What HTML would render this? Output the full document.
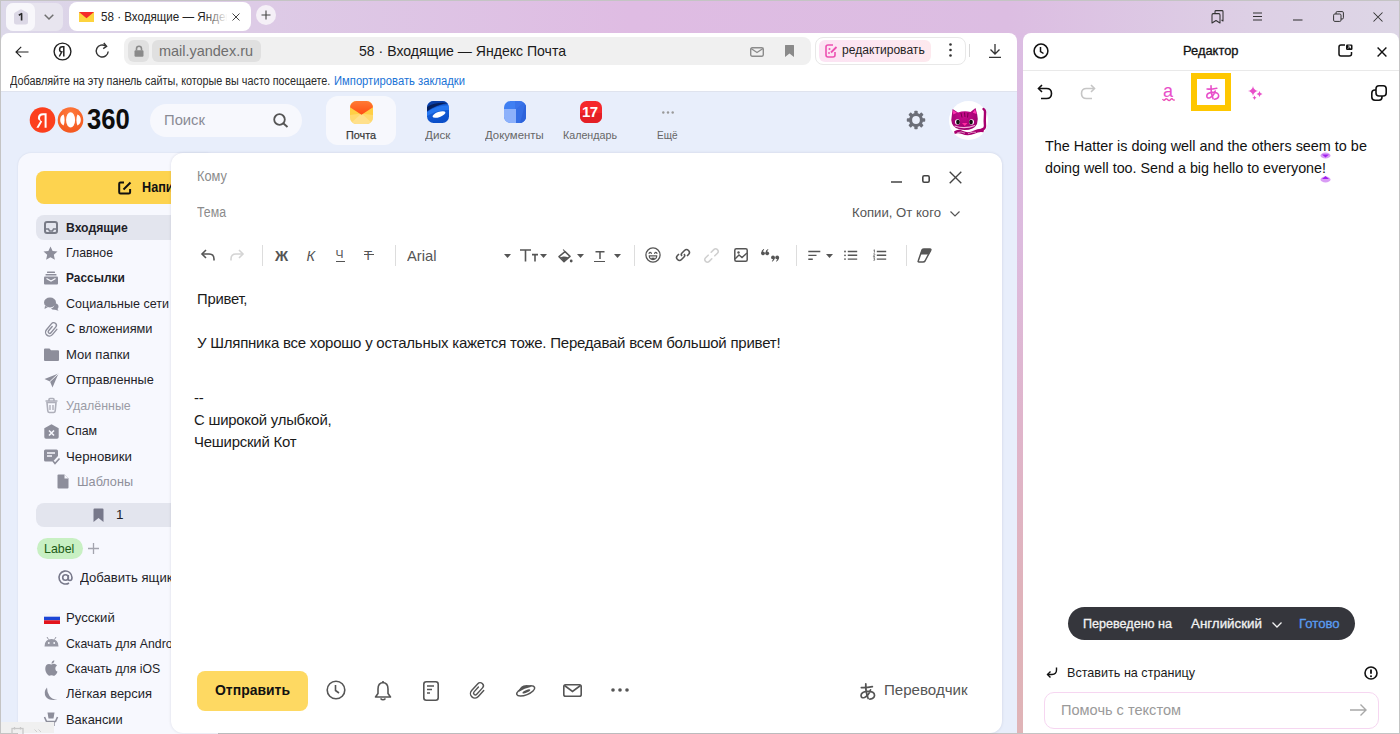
<!DOCTYPE html>
<html><head><meta charset="utf-8">
<style>
*{box-sizing:border-box;margin:0;padding:0}
html,body{width:1400px;height:734px;overflow:hidden;background:#c4c4c4;font-family:"Liberation Sans",sans-serif;}
.a{position:absolute}
.t{position:absolute;white-space:nowrap;line-height:1}
svg{position:absolute;overflow:visible}
#frame{left:1px;top:1px;width:1398px;height:732px;background:linear-gradient(90deg,#dcd8e9 0%,#ddcbe6 18%,#dfbce3 45%,#dcbde2 72%,#ddd0e5 90%,#ddd6e6 100%)}
#gapgrad{left:1017px;top:33px;width:6px;height:700px;background:linear-gradient(180deg,#dcbde3 0%,#ddbbde 30%,#e0b5cc 55%,#e0b3bb 80%,#e0b4b7 100%)}
#main{left:1px;top:32.5px;width:1016px;height:700.5px;background:#fff;border-radius:8px 8px 0 0;overflow:hidden}
#side{left:1023px;top:32.5px;width:376px;height:700.5px;background:#fff;border-radius:8px 8px 0 0;overflow:hidden}
</style></head>
<body>
<div class="a" id="frame"></div>
<div class="a" id="gapgrad"></div>

<!-- TAB BAR -->
<div class="a" style="left:6px;top:2.5px;width:57px;height:28px;border-radius:7px;background:#e8e5ef"></div>
<div class="a" style="left:6px;top:2.5px;width:28.5px;height:28px;border-radius:7px;background:#f8f7fb"></div>
<svg style="left:13px;top:9px" width="16" height="16" viewBox="0 0 16 16"><path d="M6.8 0.7 Q8 0 9.2 0.7 L14 3.6 Q15 4.2 15 5.4 V13 Q15 15.5 12.5 15.5 H3.5 Q1 15.5 1 13 V5.4 Q1 4.2 2 3.6 Z" fill="#dcd8e6"/></svg>
<svg style="left:17.5px;top:13px" width="6" height="8" viewBox="0 0 6 8"><path d="M0.8 2.2 L3.6 0.6 V7.4" stroke="#2a2a2a" stroke-width="1.6" fill="none" stroke-linejoin="round"/></svg>
<svg style="left:44px;top:13.5px" width="10" height="6" viewBox="0 0 10 6"><path d="M0.7 0.8 L5 5 L9.3 0.8" stroke="#707070" stroke-width="1.5" fill="none"/></svg>

<div class="a" style="left:69px;top:2px;width:182px;height:29px;background:#fff;border-radius:8px"></div>
<svg style="left:79px;top:12px" width="15" height="10" viewBox="0 0 15 10"><rect width="15" height="10" fill="#fdd33d"/><path d="M0 0 H15 L7.5 6.3 Z" fill="#f52a2a"/></svg>
<div class="a" style="left:101px;top:6px;width:128px;height:22px;overflow:hidden"><span class="t" style="left:0;top:4px;font-size:13.5px;color:#222;transform:scaleX(0.86);transform-origin:0 0">58 · Входящие — Яндекс Почта</span></div>
<div class="a" style="left:204px;top:6px;width:26px;height:22px;background:linear-gradient(90deg,rgba(255,255,255,0),#fff 90%)"></div>
<svg style="left:232px;top:13px" width="8" height="8" viewBox="0 0 8 8"><path d="M0.5 0.5 L7.5 7.5 M7.5 0.5 L0.5 7.5" stroke="#444" stroke-width="1"/></svg>
<div class="a" style="left:256px;top:5px;width:20px;height:20px;border-radius:50%;background:#f5f0f7"></div>
<svg style="left:261px;top:10px" width="10" height="10" viewBox="0 0 10 10"><path d="M5 0.5 V9.5 M0.5 5 H9.5" stroke="#444" stroke-width="1.1"/></svg>

<!-- window controls -->
<svg style="left:1211px;top:10px" width="13" height="14" viewBox="0 0 13 14"><path d="M4 3 V1.5 Q4 0.6 5 0.6 H11 Q12 0.6 12 1.5 V11 L10.5 10 M1 13 V5 Q1 3.6 2.2 3.6 H7.8 Q9 3.6 9 5 V13 L5 10.5 Z" stroke="#333" stroke-width="1.05" fill="none" stroke-linejoin="round"/></svg>
<svg style="left:1253px;top:12px" width="10" height="9" viewBox="0 0 10 9"><path d="M0 1 H9 M0 4.5 H9 M0 8 H9" stroke="#333" stroke-width="1.05"/></svg>
<svg style="left:1293px;top:19px" width="10" height="2" viewBox="0 0 10 2"><path d="M0 1 H9.5" stroke="#333" stroke-width="1.05"/></svg>
<svg style="left:1333px;top:11px" width="11" height="11" viewBox="0 0 11 11"><rect x="0.6" y="3" width="7.4" height="7.4" rx="1.2" stroke="#333" stroke-width="1" fill="none"/><path d="M3 3 V1.8 Q3 0.6 4.2 0.6 H9.2 Q10.4 0.6 10.4 1.8 V6.8 Q10.4 8 9.2 8 H8" stroke="#333" stroke-width="1" fill="none"/></svg>
<svg style="left:1373px;top:12px" width="10" height="10" viewBox="0 0 10 10"><path d="M0.5 0.5 L9.5 9.5 M9.5 0.5 L0.5 9.5" stroke="#333" stroke-width="1.05"/></svg>

<!-- MAIN BROWSER PANEL -->
<div class="a" id="main"></div>
<!-- nav -->
<svg style="left:15px;top:45.5px" width="14" height="12" viewBox="0 0 14 12"><path d="M13.5 6 H1 M6.2 0.8 L1 6 L6.2 11.2" stroke="#222" stroke-width="1.15" fill="none"/></svg>
<svg style="left:53px;top:42px" width="19" height="19" viewBox="0 0 19 19"><circle cx="9.5" cy="9.5" r="8.4" stroke="#222" stroke-width="1.4" fill="none"/><path d="M10.8 14.5 V4.8 H9.3 Q6.6 4.8 6.6 7.4 Q6.6 9.6 8.8 9.9 L6.3 14.5" stroke="#222" stroke-width="1.5" fill="none"/></svg>
<svg style="left:95px;top:42px" width="15" height="17" viewBox="0 0 15 17"><path d="M10.8 4.2 A6 6 0 1 0 13.2 9.5" stroke="#333" stroke-width="1.4" fill="none"/><path d="M8.8 1 L11.6 4.3 L8.2 6.6" stroke="#333" stroke-width="1.4" fill="none"/></svg>
<!-- url bar -->
<div class="a" style="left:124px;top:37px;width:687px;height:28px;border-radius:8px;background:#f0f0f0"></div>
<div class="a" style="left:128px;top:40px;width:21px;height:22px;border-radius:6px;background:#e0e0e0"></div>
<svg style="left:134px;top:45px" width="10" height="12" viewBox="0 0 10 12"><path d="M2.5 5.5 V3.8 Q2.5 1.2 5 1.2 Q7.5 1.2 7.5 3.8 V5.5" stroke="#8a8a8a" stroke-width="1.6" fill="none"/><rect x="0.5" y="5.2" width="9" height="6.5" rx="1.2" fill="#8a8a8a"/></svg>
<div class="a" style="left:152px;top:40px;width:109px;height:22px;border-radius:6px;background:#e0e0e0"></div>
<div class="t" style="left:159px;top:44px;font-size:14.5px;color:#6e6e6e;transform:scaleX(0.997);transform-origin:0 0">mail.yandex.ru</div>
<div class="t" style="left:359px;top:43px;font-size:15px;color:#1a1a1a;transform:scaleX(0.938);transform-origin:0 0">58 · Входящие — Яндекс Почта</div>
<svg style="left:750px;top:47px" width="14" height="10" viewBox="0 0 14 10"><rect x="0.7" y="0.7" width="12.6" height="8.6" rx="1.5" stroke="#8c8c8c" stroke-width="1.4" fill="none"/><path d="M1 1.5 L7 5.5 L13 1.5" stroke="#8c8c8c" stroke-width="1.4" fill="none"/></svg>
<svg style="left:785px;top:45px" width="9" height="12" viewBox="0 0 9 12"><path d="M0 0.5 Q0 0 0.5 0 H8.5 Q9 0 9 0.5 V12 L4.5 8.5 L0 12 Z" fill="#8a8a8a"/></svg>
<div class="a" style="left:815px;top:37px;width:151px;height:28px;border-radius:8px;border:1px solid #e8e8e8;background:#fff"></div>
<div class="a" style="left:819px;top:40px;width:112px;height:22px;border-radius:6px;background:linear-gradient(90deg,#fce3f4,#fde9ee)"></div>
<svg style="left:825px;top:44px" width="13" height="14" viewBox="0 0 13 14"><path d="M8 1 H3 Q1 1 1 3 V11 Q1 13 3 13 H8 Q10 13 10 11 V8" stroke="#ec4fb1" stroke-width="1.6" fill="none"/><path d="M6 8.5 L11.5 3" stroke="#ec4fb1" stroke-width="1.8"/><circle cx="4.5" cy="5" r="1" fill="#ec4fb1"/><circle cx="4" cy="9" r="0.9" fill="#ec4fb1"/></svg>
<div class="t" style="left:842px;top:44px;font-size:12.5px;color:#1f1f1f;transform:scaleX(0.967);transform-origin:0 0">редактировать</div>
<svg style="left:949px;top:43px" width="3" height="14" viewBox="0 0 3 14"><circle cx="1.5" cy="1.5" r="1.3" fill="#333"/><circle cx="1.5" cy="7" r="1.3" fill="#333"/><circle cx="1.5" cy="12.5" r="1.3" fill="#333"/></svg>
<div class="a" style="left:969px;top:44px;width:1px;height:13px;background:#d8d8d8"></div>
<svg style="left:989px;top:44px" width="12" height="14" viewBox="0 0 12 14"><path d="M6 0 V10 M1.5 5.5 L6 10 L10.5 5.5 M0 13.3 H12" stroke="#333" stroke-width="1.3" fill="none"/></svg>
<!-- bookmarks bar -->
<div class="t" style="left:10px;top:75px;font-size:12px;color:#2a2a2a;transform:scaleX(0.900);transform-origin:0 0">Добавляйте на эту панель сайты, которые вы часто посещаете.</div>
<div class="t" style="left:334px;top:75px;font-size:12px;color:#1a73d6;transform:scaleX(0.936);transform-origin:0 0">Импортировать закладки</div>

<!-- MAIL PAGE -->
<div class="a" style="left:1px;top:91px;width:1016px;height:642px;background:#e8eefb;border-top:1px solid #dfe3ee"></div>
<!-- logo -->
<svg style="left:29px;top:106px" width="56" height="28" viewBox="0 0 56 28"><circle cx="13.5" cy="14" r="12.8" fill="#fc3f1d"/><path d="M17.6 21.8 H15.6 V9.2 H14.2 Q11 9.2 11 12.4 Q11 14.8 13.2 15.6 L9.6 21.8 H7.4 L11.3 15.1 Q8.9 13.9 8.9 12.3 Q8.9 7.3 14 7.3 H17.6 Z" fill="#fff"/><defs><radialGradient id="og" cx="0.5" cy="0.25" r="0.8"><stop offset="0" stop-color="#ff7b3d"/><stop offset="1" stop-color="#f3541c"/></radialGradient></defs><circle cx="41.5" cy="14" r="12.8" fill="url(#og)"/><ellipse cx="41.6" cy="13.9" rx="4.5" ry="7.6" fill="#fff"/><path d="M31.2 14 Q31.2 10 34.6 8.6 Q35.6 11 35.6 14 Q35.6 17 34.6 19.4 Q31.2 18 31.2 14 Z" fill="#fff"/><path d="M51.8 14 Q51.8 10 48.4 8.6 Q47.4 11 47.4 14 Q47.4 17 48.4 19.4 Q51.8 18 51.8 14 Z" fill="#fff"/></svg>
<div class="t" style="left:87px;top:104.5px;font-size:29px;font-weight:700;color:#0d0d0d;transform:scaleX(0.885);transform-origin:0 0">360</div>
<!-- search -->
<div class="a" style="left:150px;top:104px;width:152px;height:33px;border-radius:17px;background:#f7f8fd"></div>
<div class="t" style="left:164px;top:112px;font-size:15px;color:#8a8b95;transform:scaleX(0.986);transform-origin:0 0">Поиск</div>
<svg style="left:273px;top:113px" width="16" height="15" viewBox="0 0 16 15"><circle cx="6.5" cy="6.5" r="5.3" stroke="#555" stroke-width="1.8" fill="none"/><path d="M10.5 10.5 L14.5 14" stroke="#555" stroke-width="1.9"/></svg>
<!-- apps -->
<div class="a" style="left:326px;top:96px;width:70px;height:49px;border-radius:12px;background:#f7f8fd"></div>
<svg style="left:350px;top:101px" width="23" height="23" viewBox="0 0 23 23"><defs><clipPath id="mc"><rect width="23" height="23" rx="6.5"/></clipPath><linearGradient id="mr" x1="0.5" y1="0" x2="0.5" y2="1"><stop offset="0" stop-color="#ff7a35"/><stop offset="1" stop-color="#ff4d12"/></linearGradient></defs><g clip-path="url(#mc)"><rect width="23" height="23" fill="#ffcf45"/><path d="M0 23 L11.5 12.5 L23 23 Z" fill="#ffe28e"/><path d="M0 14 L11.5 12.5 L23 14 V23 H0 Z" fill="#ffe08a" opacity=".6"/><path d="M0 0 H23 V6.2 L11.5 13.8 L0 6.2 Z" fill="url(#mr)"/></g></svg>
<div class="t" style="left:346px;top:130px;font-size:11.5px;color:#3a3a3a;-webkit-text-stroke:0.25px currentColor;transform:scaleX(0.939);transform-origin:0 0">Почта</div>
<svg style="left:427px;top:101px" width="22" height="22" viewBox="0 0 22 22"><defs><clipPath id="cd"><rect width="22" height="22" rx="6.5"/></clipPath><linearGradient id="dg" x1="0" y1="0" x2="0.3" y2="1"><stop offset="0" stop-color="#1f6fe8"/><stop offset="1" stop-color="#0b4fc9"/></linearGradient></defs><g clip-path="url(#cd)"><rect width="22" height="22" fill="url(#dg)"/><path d="M0 0 H22 V3 Q10 3 0 11 Z" fill="#0a3fa6"/><path d="M0 6 Q8 1 20 2 Q9 4 0 10 Z" fill="#051f5c"/><path d="M0 11 Q10 4 22 4.5 V9 Q12 8 0 15 Z" fill="#2f86ff" opacity=".6"/><ellipse cx="12" cy="13.5" rx="6.8" ry="2.6" transform="rotate(-20 12 13.5)" fill="#fff"/></g></svg>
<div class="t" style="left:425px;top:130px;font-size:11.5px;color:#666;transform:scaleX(1.016);transform-origin:0 0">Диск</div>
<svg style="left:504px;top:101px" width="22" height="22" viewBox="0 0 22 22"><defs><clipPath id="cc"><rect width="22" height="22" rx="6.5"/></clipPath></defs><g clip-path="url(#cc)"><rect width="22" height="22" fill="#3f7ff2"/><path d="M11 0 H22 V22 H11 Z" fill="#3a74ea"/><path d="M22 0 V22 H16 Z" fill="#2a5fd6"/><path d="M12 8 L22 0 V22 H12 Z" fill="#2f68e0" opacity=".5"/><rect x="0" y="8" width="12" height="14" fill="#8db1fb"/></g></svg>
<div class="t" style="left:485px;top:130px;font-size:11.5px;color:#666;transform:scaleX(0.989);transform-origin:0 0">Документы</div>
<svg style="left:580px;top:101px" width="22" height="22" viewBox="0 0 22 22"><defs><clipPath id="ck"><rect width="22" height="22" rx="6.5"/></clipPath></defs><g clip-path="url(#ck)"><rect width="22" height="22" fill="#f5282c"/><rect y="12" width="22" height="10" fill="#e41f25"/></g></svg>
<div class="t" style="left:582px;top:104px;font-size:15px;font-weight:700;color:#fff;letter-spacing:-0.5px">17</div>
<div class="t" style="left:563px;top:130px;font-size:11.5px;color:#666;transform:scaleX(0.930);transform-origin:0 0">Календарь</div>
<svg style="left:662px;top:111px" width="12" height="3" viewBox="0 0 12 3"><circle cx="1.3" cy="1.5" r="1.2" fill="#999"/><circle cx="6" cy="1.5" r="1.2" fill="#999"/><circle cx="10.7" cy="1.5" r="1.2" fill="#999"/></svg>
<div class="t" style="left:657px;top:130px;font-size:11.5px;color:#666;transform:scaleX(0.875);transform-origin:0 0">Ещё</div>
<!-- settings -->
<svg style="left:906px;top:110px" width="20" height="20" viewBox="0 0 20 20"><g fill="#6b6e78"><circle cx="10" cy="10" r="7"/><g id="tooth"><rect x="8.3" y="0.8" width="3.4" height="4" rx="0.8"/></g><use href="#tooth" transform="rotate(45 10 10)"/><use href="#tooth" transform="rotate(90 10 10)"/><use href="#tooth" transform="rotate(135 10 10)"/><use href="#tooth" transform="rotate(180 10 10)"/><use href="#tooth" transform="rotate(225 10 10)"/><use href="#tooth" transform="rotate(270 10 10)"/><use href="#tooth" transform="rotate(315 10 10)"/></g><circle cx="10" cy="10" r="3.9" fill="#e9eefb"/></svg>
<!-- avatar -->
<div class="a" style="left:949px;top:101px;width:39px;height:39px;border-radius:50%;background:#fff"></div>
<svg style="left:949px;top:101px" width="40" height="40" viewBox="0 0 40 40"><defs><radialGradient id="ch" cx="0.45" cy="0.35" r="0.7"><stop offset="0" stop-color="#c80a8c"/><stop offset="1" stop-color="#98006a"/></radialGradient></defs>
<path d="M34.5 8 Q36.5 9 36 13 Q35.5 20 36 25 Q36 28 33 28.5" stroke="#a8006f" stroke-width="2.4" fill="none" stroke-linecap="round"/>
<g transform="translate(0 2.5)">
<path d="M2.8 12 L3.6 5.5 L9 9 Q15 7 21.5 8.5 L26.5 4.5 L28.2 11 Q29.5 15.5 28 20.5 Q25 26.5 15.5 26.5 Q5.5 26.5 3 20 Q1.8 16 2.8 12 Z" fill="url(#ch)"/>
<path d="M4 6.8 L8 9.2 L4.2 11 Z M26 5.8 L27.6 10.6 L23.8 9.2 Z" fill="#ff33b0"/>
<path d="M12 9.5 L13 14 M15.5 9 L16 13.5 M19 9.5 L18.5 14" stroke="#78004e" stroke-width="1"/>
<ellipse cx="8.5" cy="18.5" rx="2.5" ry="2.8" fill="#fff"/><ellipse cx="22.5" cy="18.5" rx="2.5" ry="2.8" fill="#fff"/>
<ellipse cx="9" cy="18.6" rx="1.9" ry="2.4" fill="#111"/><ellipse cx="22" cy="18.6" rx="1.9" ry="2.4" fill="#111"/>
<path d="M13 19.5 H18.5 L15.8 22.5 Z" fill="#ff2aa0"/>
<path d="M5.5 22.5 Q15.5 26 26 22" stroke="#f4b0dc" stroke-width="1.1" fill="none"/>
</g>
<path d="M5 30.5 Q9 27.5 14 30 Q19.5 32.5 25 29.5 Q30 27 35 28.2 L34.5 31.2 Q30 30.2 25.5 32.8 Q19 35.5 13 33 Q9 31.5 5.8 33 Z" fill="#a8006f"/>
<path d="M8 32 Q12 29.8 16 32.2 M19 32.8 Q23 30.5 27 31.3" stroke="#fff" stroke-width="0.8" fill="none" opacity=".7"/>
</svg>

<!-- SIDEBAR -->
<div class="a" style="left:18px;top:153px;width:200px;height:600px;border-radius:13px;background:#f7f8fe;box-shadow:0 0 2px rgba(0,0,60,.1)"></div>
<div class="a" style="left:36px;top:171px;width:180px;height:33px;border-radius:8px;background:#fdd34f"></div>
<div class="a" style="left:36px;top:215px;width:180px;height:25px;border-radius:8px;background:#e3e5ee"></div>
<svg style="left:118px;top:181px" width="14" height="14" viewBox="0 0 14 14"><path d="M6 1.5 H2.5 Q1.2 1.5 1.2 2.8 V11.2 Q1.2 12.5 2.5 12.5 H10.8 Q12.1 12.5 12.1 11.2 V8" stroke="#111" stroke-width="2" fill="none"/><path d="M5.5 8.5 L12.5 1.5" stroke="#111" stroke-width="2"/></svg>
<div class="t" style="left:142px;top:180px;font-size:14px;font-weight:700;color:#111;transform:scaleX(0.903);transform-origin:0 0">Написать</div>
<!-- sidebar items -->
<svg style="left:44px;top:221px" width="14" height="13" viewBox="0 0 14 13"><rect x="1" y="1" width="12" height="11" rx="2" stroke="#777a86" stroke-width="2" fill="none"/><path d="M1 8 H4.5 L5.5 10 H8.5 L9.5 8 H13" stroke="#777a86" stroke-width="1.6" fill="none"/></svg>
<div class="t" style="left:66px;top:221px;font-size:13.5px;font-weight:700;color:#1f1f29;transform:scaleX(0.903);transform-origin:0 0">Входящие</div>
<svg style="left:43px;top:246px" width="15" height="15" viewBox="0 0 15 15"><path d="M7.5 0.5 L9.6 5 L14.5 5.5 L10.8 8.8 L11.9 13.8 L7.5 11.2 L3.1 13.8 L4.2 8.8 L0.5 5.5 L5.4 5 Z" fill="#8d8e9b"/></svg>
<div class="t" style="left:66px;top:246px;font-size:13.5px;color:#1f1f29;transform:scaleX(0.911);transform-origin:0 0">Главное</div>
<svg style="left:44px;top:271px" width="14" height="14" viewBox="0 0 14 14"><rect x="3" y="0.5" width="8" height="1.6" rx=".5" fill="#8d8e9b"/><rect x="1.5" y="3" width="11" height="1.6" rx=".5" fill="#8d8e9b"/><path d="M0 6.5 Q0 5.5 1 5.5 H13 Q14 5.5 14 6.5 V12.5 Q14 13.5 13 13.5 H1 Q0 13.5 0 12.5 Z" fill="#8d8e9b"/><path d="M2.5 7.5 L7 10 L11.5 7.5" stroke="#f7f8fe" stroke-width="1.3" fill="none"/></svg>
<div class="t" style="left:66px;top:271px;font-size:13.5px;font-weight:700;color:#1f1f29;transform:scaleX(0.884);transform-origin:0 0">Рассылки</div>
<svg style="left:44px;top:297px" width="15" height="14" viewBox="0 0 15 14"><ellipse cx="6" cy="5.5" rx="6" ry="5" fill="#8d8e9b"/><path d="M1 9 L0.5 12 L4 10 Z" fill="#8d8e9b"/><path d="M10.5 6 Q14.5 6.5 14.5 9.5 Q14.5 11 13.5 12 L14.5 13.8 L11 12.8 Q8 13 7 11.5 Q11 10.5 10.5 6 Z" fill="#8d8e9b"/></svg>
<div class="t" style="left:66px;top:297px;font-size:13.5px;color:#1f1f29;transform:scaleX(0.929);transform-origin:0 0">Социальные сети</div>
<svg style="left:43px;top:321px" width="17" height="17" viewBox="0 0 19 21"><g transform="translate(9.8 10.4) rotate(40) scale(0.95) translate(-5 -9.8)"><path d="M10 5.5 V14.5 A5 5 0 0 1 0 14.5 V4.2 A3.5 3.5 0 0 1 7 4.2 V13.8 A2 2 0 0 1 3 13.8 V6.5" stroke="#8d8e9b" stroke-width="1.8" fill="none" stroke-linecap="round"/></g></svg>
<div class="t" style="left:66px;top:322px;font-size:13.5px;color:#1f1f29;transform:scaleX(0.946);transform-origin:0 0">С вложениями</div>
<svg style="left:44px;top:348px" width="15" height="13" viewBox="0 0 15 13"><path d="M0 1.5 Q0 0.5 1 0.5 H5.5 L7 2.3 H14 Q15 2.3 15 3.3 V12 Q15 13 14 13 H1 Q0 13 0 12 Z" fill="#8d8e9b"/></svg>
<div class="t" style="left:66px;top:348px;font-size:13.5px;color:#1f1f29;transform:scaleX(0.970);transform-origin:0 0">Мои папки</div>
<svg style="left:44px;top:373px" width="15" height="15" viewBox="0 0 15 15"><path d="M14.5 0.5 L0.5 6 L6 8.5 L8.5 14.5 Z" fill="#8d8e9b"/><path d="M6 8.5 L14.5 0.5" stroke="#f7f8fe" stroke-width="1"/></svg>
<div class="t" style="left:66px;top:373px;font-size:13.5px;color:#1f1f29;transform:scaleX(0.940);transform-origin:0 0">Отправленные</div>
<svg style="left:45px;top:398px" width="13" height="15" viewBox="0 0 13 15"><path d="M4 2.5 V1.5 Q4 0.5 5 0.5 H8 Q9 0.5 9 1.5 V2.5 M0.5 3 H12.5" stroke="#aeafba" stroke-width="1.6" fill="none"/><path d="M2 4.5 H11 L10.2 13 Q10 14.5 8.5 14.5 H4.5 Q3 14.5 2.8 13 Z" stroke="#aeafba" stroke-width="1.6" fill="none"/><path d="M5 7 V12 M8 7 V12" stroke="#aeafba" stroke-width="1.4"/></svg>
<div class="t" style="left:66px;top:399px;font-size:13.5px;color:#9b9ca6;transform:scaleX(0.919);transform-origin:0 0">Удалённые</div>
<svg style="left:44px;top:424px" width="15" height="15" viewBox="0 0 15 15"><path d="M7.5 0.3 L14.7 4.3 V13 Q14.7 14.7 13 14.7 H2 Q0.3 14.7 0.3 13 V4.3 Z" fill="#8d8e9b"/><path d="M5 6.5 L10 11.5 M10 6.5 L5 11.5" stroke="#f7f8fe" stroke-width="1.6"/></svg>
<div class="t" style="left:66px;top:424px;font-size:13.5px;color:#1f1f29;transform:scaleX(0.916);transform-origin:0 0">Спам</div>
<svg style="left:44px;top:449px" width="16" height="16" viewBox="0 0 16 16"><path d="M0 2 Q0 0.5 1.5 0.5 H12.5 Q14 0.5 14 2 V7 L9 12.5 H1.5 Q0 12.5 0 11 Z" fill="#8d8e9b"/><path d="M3 4 H11 M3 7 H8" stroke="#f7f8fe" stroke-width="1.4"/><path d="M9 12 L11 14.5 L15.5 9.5" stroke="#8d8e9b" stroke-width="1.6" fill="none"/></svg>
<div class="t" style="left:66px;top:450px;font-size:13.5px;color:#1f1f29;transform:scaleX(0.983);transform-origin:0 0">Черновики</div>
<svg style="left:57px;top:474px" width="12" height="15" viewBox="0 0 12 15"><path d="M1.5 0.5 H7.5 L11.5 4.5 V13.5 Q11.5 14.5 10.5 14.5 H1.5 Q0.5 14.5 0.5 13.5 V1.5 Q0.5 0.5 1.5 0.5 Z" fill="#8d8e9b"/><path d="M7.5 0.5 V4.5 H11.5" fill="#f7f8fe"/></svg>
<div class="t" style="left:77px;top:475px;font-size:13.5px;color:#8f909b;transform:scaleX(0.938);transform-origin:0 0">Шаблоны</div>
<div class="a" style="left:36px;top:503px;width:180px;height:24px;border-radius:8px;background:#e3e5ee"></div>
<svg style="left:93px;top:508px" width="11" height="14" viewBox="0 0 11 14"><path d="M0.5 1.5 Q0.5 0.5 1.5 0.5 H9.5 Q10.5 0.5 10.5 1.5 V14 L5.5 10 L0.5 14 Z" fill="#77788a"/></svg>
<div class="t" style="left:116px;top:508px;font-size:13.5px;color:#1f1f29">1</div>
<div class="a" style="left:37px;top:538px;width:46px;height:21px;border-radius:11px;background:#c8f0c3"></div>
<div class="t" style="left:44px;top:542px;font-size:13px;color:#1c5b17;transform:scaleX(0.952);transform-origin:0 0">Label</div>
<svg style="left:88px;top:543px" width="11" height="11" viewBox="0 0 11 11"><path d="M5.5 0 V11 M0 5.5 H11" stroke="#a3a4ae" stroke-width="1.3"/></svg>
<svg style="left:58px;top:570px" width="15" height="15" viewBox="0 0 15 15"><circle cx="7.5" cy="7.5" r="2.8" stroke="#77788a" stroke-width="1.6" fill="none"/><path d="M10.3 5 V8.8 Q10.3 10.5 12 10.5 Q14 10.5 14 7.5 A6.5 6.5 0 1 0 11 13" stroke="#77788a" stroke-width="1.6" fill="none"/></svg>
<div class="t" style="left:80px;top:571px;font-size:13.5px;color:#1f1f29;transform:scaleX(0.970);transform-origin:0 0">Добавить ящик</div>
<svg style="left:44px;top:613px" width="16" height="11" viewBox="0 0 16 11"><rect width="16" height="3.7" fill="#f4f4f8"/><rect y="3.7" width="16" height="3.6" fill="#1c45d6"/><rect y="7.3" width="16" height="3.7" fill="#e3141c"/></svg>
<div class="t" style="left:66px;top:611px;font-size:13.5px;color:#1f1f29;transform:scaleX(0.974);transform-origin:0 0">Русский</div>
<svg style="left:44px;top:637px" width="15" height="10" viewBox="0 0 15 10"><path d="M0.5 9.5 Q0.5 2 7.5 2 Q14.5 2 14.5 9.5 Z" fill="#9798a4"/><path d="M3 0 L4.5 2.5 M12 0 L10.5 2.5" stroke="#9798a4" stroke-width="1"/><circle cx="4.8" cy="6" r=".9" fill="#f7f8fe"/><circle cx="10.2" cy="6" r=".9" fill="#f7f8fe"/></svg>
<div class="t" style="left:66px;top:637px;font-size:13.5px;color:#1f1f29;transform:scaleX(0.909);transform-origin:0 0">Скачать для Android</div>
<svg style="left:45px;top:660px" width="13" height="16" viewBox="0 0 13 16"><path d="M6.5 4.5 Q8.5 3.5 10 4 Q11.5 4.6 12 5.5 Q10 6.8 10.3 9 Q10.6 11 12.5 11.8 Q11.5 14.8 9.8 15.5 Q8.8 15.9 7.8 15.5 Q6.5 15 5.2 15.5 Q4 16 3 15 Q0 12 0.3 8 Q0.7 4.2 4 4 Q5.2 4 6.5 4.5 Z" fill="#8d8e9b"/><path d="M6.5 3.8 Q6.5 1 9.3 0.3 Q9.5 3 6.5 3.8 Z" fill="#8d8e9b"/></svg>
<div class="t" style="left:66px;top:662px;font-size:13.5px;color:#1f1f29;transform:scaleX(0.909);transform-origin:0 0">Скачать для iOS</div>
<svg style="left:44px;top:687px" width="14" height="14" viewBox="0 0 14 14"><path d="M3 0.5 Q-1 5 2 10 Q5 14 13.5 12.5 Q8 12.5 5.5 9 Q3 5.5 3 0.5 Z" fill="#8d8e9b"/></svg>
<div class="t" style="left:66px;top:687px;font-size:13.5px;color:#1f1f29;transform:scaleX(0.959);transform-origin:0 0">Лёгкая версия</div>
<svg style="left:44px;top:712px" width="14" height="15" viewBox="0 0 14 15"><path d="M3.5 0.5 H10.5 L9.5 6.5 H4.5 Z" fill="#8d8e9b"/><path d="M0.5 5 L2.5 9.5 H11.5 L13.5 5" stroke="#8d8e9b" stroke-width="1.6" fill="none"/><path d="M4 10 V14 M10 10 V14" stroke="#8d8e9b" stroke-width="1.4"/></svg>
<div class="t" style="left:66px;top:713px;font-size:13.5px;color:#1f1f29;transform:scaleX(0.953);transform-origin:0 0">Вакансии</div>
<!-- bottom-left mini bar -->
<div class="a" style="left:1px;top:722px;width:53px;height:11px;background:#f0f0f0"></div>
<svg style="left:11px;top:727px" width="13" height="7" viewBox="0 0 13 7"><rect x="1" y="1.5" width="11" height="6" stroke="#c8c8c8" stroke-width="1.3" fill="none"/><path d="M3.5 0 V2.5 M9.5 0 V2.5" stroke="#c8c8c8" stroke-width="1.3"/></svg>
<svg style="left:34px;top:729px" width="8" height="5" viewBox="0 0 8 5"><path d="M0.5 0.5 L3 3 M4.5 0.5 L7 3" stroke="#cfcfcf" stroke-width="1"/></svg>

<!-- COMPOSE -->
<div class="a" style="left:171px;top:153px;width:831px;height:580px;border-radius:12px;background:#fff;box-shadow:0 0 3px rgba(0,0,60,.12)"></div>
<div class="t" style="left:197px;top:169px;font-size:14px;color:#8b8b8b;transform:scaleX(0.916);transform-origin:0 0">Кому</div>
<div class="t" style="left:197px;top:205px;font-size:14px;color:#8b8b8b;transform:scaleX(0.880);transform-origin:0 0">Тема</div>
<svg style="left:891px;top:180.5px" width="12" height="2" viewBox="0 0 12 2"><path d="M0 1 H11" stroke="#444" stroke-width="1.5"/></svg>
<svg style="left:921.5px;top:174.5px" width="8" height="8" viewBox="0 0 8 8"><rect x="0.8" y="0.8" width="6.4" height="6.4" rx="1.4" stroke="#444" stroke-width="1.6" fill="none"/></svg>
<svg style="left:949px;top:171px" width="13" height="13" viewBox="0 0 13 13"><path d="M0.7 0.7 L12.3 12.3 M12.3 0.7 L0.7 12.3" stroke="#444" stroke-width="1.35"/></svg>
<div class="t" style="left:852px;top:206px;font-size:13px;color:#555;transform:scaleX(1.011);transform-origin:0 0">Копии, От кого</div>
<svg style="left:950px;top:211px" width="10" height="6" viewBox="0 0 10 6"><path d="M0.5 0.5 L5 5 L9.5 0.5" stroke="#555" stroke-width="1.2" fill="none"/></svg>
<!-- toolbar -->
<svg style="left:201px;top:249px" width="14" height="12" viewBox="0 0 14 12"><path d="M5 1 L1 5 L5 9" stroke="#555" stroke-width="1.6" fill="none"/><path d="M1.5 5 H8 Q13 5 13 10 V11.5" stroke="#555" stroke-width="1.6" fill="none"/></svg>
<svg style="left:230px;top:249px" width="14" height="12" viewBox="0 0 14 12"><path d="M9 1 L13 5 L9 9" stroke="#d4d4d4" stroke-width="1.6" fill="none"/><path d="M12.5 5 H6 Q1 5 1 10 V11.5" stroke="#d4d4d4" stroke-width="1.6" fill="none"/></svg>
<div class="a" style="left:262px;top:245px;width:1px;height:21px;background:#ddd"></div>
<div class="t" style="left:275px;top:249px;font-size:14.5px;font-weight:700;color:#555">Ж</div>
<div class="t" style="left:306.5px;top:249px;font-size:14.5px;font-style:italic;color:#555">К</div>
<div class="t" style="left:335.5px;top:249px;font-size:12px;color:#555;transform:scaleY(0.85);transform-origin:0 0">Ч</div>
<div class="a" style="left:335.5px;top:261px;width:9.5px;height:1.4px;background:#555"></div>
<div class="t" style="left:364px;top:249px;font-size:13.5px;color:#555">Т</div>
<div class="a" style="left:364px;top:254px;width:10px;height:1.3px;background:#555"></div>
<div class="a" style="left:395px;top:245px;width:1px;height:21px;background:#ddd"></div>
<div class="t" style="left:407px;top:248px;font-size:15px;color:#555;transform:scaleX(0.983);transform-origin:0 0">Arial</div>
<svg style="left:504px;top:254px" width="7" height="4" viewBox="0 0 7 4"><path d="M0 0 H7 L3.5 4 Z" fill="#555"/></svg>
<svg style="left:519px;top:249px" width="20" height="13" viewBox="0 0 20 13"><path d="M1 1 H12 M6.5 1 V12.5 M13 5.6 H19 M16 5.6 V12.5" stroke="#555" stroke-width="1.6" fill="none"/></svg>

<svg style="left:540px;top:254px" width="7" height="4" viewBox="0 0 7 4"><path d="M0 0 H7 L3.5 4 Z" fill="#555"/></svg>
<svg style="left:558px;top:249px" width="16" height="14" viewBox="0 0 16 14"><path d="M5.2 0.5 L6.8 2.5" stroke="#555" stroke-width="1.2"/><path d="M7 2.6 L12 7.4 L6 12.6 L1 7.6 Z" stroke="#555" stroke-width="1.5" fill="none" stroke-linejoin="round"/><path d="M2.6 8.2 Q6 6.8 10.6 8.6 L6 12 Z" fill="#555"/><circle cx="13.2" cy="12" r="1.4" fill="#555"/></svg>
<svg style="left:577px;top:254px" width="7" height="4" viewBox="0 0 7 4"><path d="M0 0 H7 L3.5 4 Z" fill="#555"/></svg>
<svg style="left:594.5px;top:251px" width="10" height="8" viewBox="0 0 10 8"><path d="M0.5 0.8 H9.5 M5 0.8 V8" stroke="#555" stroke-width="1.5" fill="none"/></svg>
<div class="a" style="left:594px;top:261px;width:11px;height:1.4px;background:#555"></div>
<svg style="left:614px;top:254px" width="7" height="4" viewBox="0 0 7 4"><path d="M0 0 H7 L3.5 4 Z" fill="#555"/></svg>
<div class="a" style="left:634px;top:245px;width:1px;height:21px;background:#ddd"></div>
<svg style="left:645px;top:247px" width="16" height="16" viewBox="0 0 16 16"><circle cx="8" cy="8" r="7.1" stroke="#555" stroke-width="1.3" fill="none"/><path d="M4 6.3 Q5.2 4.6 6.4 6.3 M9.6 6.3 Q10.8 4.6 12 6.3" stroke="#555" stroke-width="1.2" fill="none" stroke-linecap="round"/><path d="M4.2 8.8 H11.8 Q11.4 12.6 8 12.6 Q4.6 12.6 4.2 8.8 Z" stroke="#555" stroke-width="1.2" fill="none" stroke-linejoin="round"/><path d="M5.8 11 Q8 10 10.2 11 Q9.5 12.2 8 12.2 Q6.5 12.2 5.8 11 Z" fill="#555"/></svg>
<svg style="left:675px;top:247px" width="16" height="16" viewBox="0 0 16 16"><path d="M7 9 Q5.5 7.5 7 6 L9.5 3.5 Q11.5 1.5 13.5 3.5 Q15.5 5.5 13.5 7.5 L12 9" stroke="#555" stroke-width="1.6" fill="none"/><path d="M9 7 Q10.5 8.5 9 10 L6.5 12.5 Q4.5 14.5 2.5 12.5 Q0.5 10.5 2.5 8.5 L4 7" stroke="#555" stroke-width="1.6" fill="none"/></svg>
<svg style="left:702px;top:246px" width="19" height="19" viewBox="0 0 19 19"><g stroke="#d0d0d0" stroke-width="1.6" fill="none" stroke-linecap="round"><path d="M9.2 6.2 L11.8 3.6 Q13.6 1.8 15.4 3.6 Q17.2 5.4 15.4 7.2 L12.8 9.8"/><path d="M9.8 12.8 L7.2 15.4 Q5.4 17.2 3.6 15.4 Q1.8 13.6 3.6 11.8 L6.2 9.2"/></g></svg>
<svg style="left:734px;top:248px" width="14" height="14" viewBox="0 0 14 14"><rect x="0.8" y="0.8" width="12.4" height="12.4" rx="1.5" stroke="#555" stroke-width="1.5" fill="none"/><path d="M1 11 L5 7 L8 9.5 L13 5" stroke="#555" stroke-width="1.4" fill="none"/><circle cx="4.5" cy="4.5" r="1.2" fill="#555"/></svg>
<svg style="left:761px;top:249px" width="19" height="14" viewBox="0 0 19 14"><g fill="#555"><circle cx="2" cy="4.3" r="1.9"/><path d="M0.2 4.2 Q0.3 1 2.8 0 L3.2 0.7 Q1.8 1.5 1.9 3 Z"/><circle cx="6.2" cy="4.3" r="1.9"/><path d="M4.4 4.2 Q4.5 1 7 0 L7.4 0.7 Q6 1.5 6.1 3 Z"/><circle cx="12" cy="8.4" r="1.9"/><path d="M13.8 8.5 Q13.7 11.7 11.2 12.7 L10.8 12 Q12.2 11.2 12.1 9.7 Z"/><circle cx="16.2" cy="8.4" r="1.9"/><path d="M18 8.5 Q17.9 11.7 15.4 12.7 L15 12 Q16.4 11.2 16.3 9.7 Z"/></g></svg>

<div class="a" style="left:796px;top:245px;width:1px;height:21px;background:#ddd"></div>
<svg style="left:808px;top:250px" width="13" height="11" viewBox="0 0 13 11"><path d="M0.3 1.5 H12.3 M0.3 5.4 H8.5 M0.3 9.2 H4.8" stroke="#555" stroke-width="1.4"/></svg>
<svg style="left:826px;top:254px" width="7" height="4" viewBox="0 0 7 4"><path d="M0 0 H7 L3.5 4 Z" fill="#555"/></svg>
<svg style="left:844px;top:249px" width="14" height="12" viewBox="0 0 14 12"><circle cx="1" cy="2.5" r="0.9" fill="#555"/><circle cx="1" cy="6.3" r="0.9" fill="#555"/><circle cx="1" cy="10.1" r="0.9" fill="#555"/><path d="M3.8 2.5 H13.2 M3.8 6.3 H13.2 M3.8 10.1 H13.2" stroke="#555" stroke-width="1.4"/></svg>
<svg style="left:873px;top:249px" width="14" height="12" viewBox="0 0 14 12"><path d="M0.6 1.2 L1.4 0.8 V3.6 M0.4 5 Q1.6 4.2 1.9 5.2 L0.4 7.4 H2 M0.4 8.8 H1.8 L1 9.9 Q2.1 10.2 1.6 11.2 Q1 11.7 0.4 11.2" stroke="#555" stroke-width="0.8" fill="none"/><path d="M3.8 2.5 H13.2 M3.8 6.3 H13.2 M3.8 10.1 H13.2" stroke="#555" stroke-width="1.4"/></svg>
<div class="a" style="left:906px;top:245px;width:1px;height:21px;background:#ddd"></div>
<svg style="left:917px;top:248px" width="15" height="15" viewBox="0 0 15 15"><path d="M5 2 Q5.7 1 7 1 H13 Q14.3 1 13.7 2.3 L8 13 Q7.4 14 6 14 H2 Q0.7 14 1.3 12.7 Z" stroke="#555" stroke-width="1.5" fill="none"/><path d="M5 2 Q5.7 1 7 1 H13 Q14.3 1 13.7 2.3 L11.5 6.5 H3 Z" fill="#555"/></svg>
<!-- body -->
<div class="t" style="left:197px;top:291px;font-size:15px;color:#1a1a1a;letter-spacing:-0.23px;transform:scaleX(0.986);transform-origin:0 0">Привет,</div>
<div class="t" style="left:197px;top:335px;font-size:15px;color:#1a1a1a;letter-spacing:-0.23px;transform:scaleX(1.000);transform-origin:0 0">У Шляпника все хорошо у остальных кажется тоже. Передавай всем большой привет!</div>
<div class="t" style="left:194px;top:390px;font-size:15px;color:#1a1a1a;letter-spacing:-0.23px;transform:scaleX(0.996);transform-origin:0 0">--</div>
<div class="t" style="left:194px;top:412px;font-size:15px;color:#1a1a1a;letter-spacing:-0.23px;transform:scaleX(0.992);transform-origin:0 0">С широкой улыбкой,</div>
<div class="t" style="left:194px;top:434px;font-size:15px;color:#1a1a1a;letter-spacing:-0.23px;transform:scaleX(0.996);transform-origin:0 0">Чеширский Кот</div>
<!-- bottom bar -->
<div class="a" style="left:197px;top:670.5px;width:111px;height:40px;border-radius:8px;background:#fed962"></div>
<div class="t" style="left:215px;top:683px;font-size:14.5px;font-weight:700;color:#111;transform:scaleX(0.963);transform-origin:0 0">Отправить</div>
<svg style="left:326px;top:680px" width="20" height="20" viewBox="0 0 20 20"><circle cx="10" cy="10" r="8.8" stroke="#555" stroke-width="1.6" fill="none"/><path d="M9.5 5 V10.5 L13 13" stroke="#555" stroke-width="1.6" fill="none"/></svg>
<svg style="left:374px;top:681px" width="18" height="20" viewBox="0 0 18 20"><path d="M9 1.5 Q14 2 14 8 V12.5 L16.5 16 H1.5 L4 12.5 V8 Q4 2 9 1.5 Z" stroke="#555" stroke-width="1.6" fill="none" stroke-linejoin="round"/><path d="M6.5 17.5 Q9 20 11.5 17.5" stroke="#555" stroke-width="1.6" fill="none"/><path d="M9 0 V2" stroke="#555" stroke-width="1.6"/></svg>
<svg style="left:423px;top:681px" width="16" height="20" viewBox="0 0 16 20"><rect x="0.8" y="0.8" width="14.4" height="18.4" rx="2.5" stroke="#555" stroke-width="1.6" fill="none"/><path d="M4 5 H11 M4 8.5 H9 M4 12 H7" stroke="#555" stroke-width="1.6"/></svg>
<svg style="left:468px;top:680px" width="19" height="21" viewBox="0 0 19 21"><g transform="translate(9.8 10.4) rotate(42) scale(0.9) translate(-5 -9.8)"><path d="M10 5.5 V14.5 A5 5 0 0 1 0 14.5 V4.2 A3.5 3.5 0 0 1 7 4.2 V13.8 A2 2 0 0 1 3 13.8 V6.5" stroke="#555" stroke-width="1.6" fill="none" stroke-linecap="round"/></g></svg>
<svg style="left:515px;top:683px" width="22" height="15" viewBox="0 0 22 15"><g transform="rotate(-22 10.5 7.5)"><ellipse cx="10.5" cy="8" rx="9.6" ry="3.9" stroke="#555" stroke-width="1.5" fill="none"/><path d="M3.5 6.2 Q6 2.2 10.5 2.2 Q15 2.2 17.5 6.2 Q10.5 4.6 3.5 6.2 Z" fill="#555"/><ellipse cx="11" cy="8.6" rx="4.2" ry="1.3" fill="#555"/></g></svg>
<svg style="left:563px;top:684px" width="19" height="13" viewBox="0 0 19 13"><rect x="0.8" y="0.8" width="17.4" height="11.4" rx="1.8" stroke="#555" stroke-width="1.6" fill="none"/><path d="M1.5 1.5 L9.5 7.5 L17.5 1.5" stroke="#555" stroke-width="1.6" fill="none"/></svg>
<svg style="left:611px;top:688px" width="18" height="4" viewBox="0 0 18 4"><circle cx="2" cy="2" r="1.8" fill="#555"/><circle cx="9" cy="2" r="1.8" fill="#555"/><circle cx="16" cy="2" r="1.8" fill="#555"/></svg>
<svg style="left:858.5px;top:682.5px" width="17" height="17" viewBox="0 0 16 16"><g stroke="#555" stroke-width="1.6" fill="none" stroke-linecap="round"><path d="M2.2 4.3 Q7 4.6 12.6 3.4"/><path d="M6.4 0.8 Q5.9 8 8.6 14.6"/><path d="M10.9 6.4 Q9.2 11.8 5.2 13.6 Q2 14.6 1.9 11.8 Q2 8.2 8 7.9 Q14.6 7.7 14.6 11.6 Q14.4 14.6 10.2 15.2"/></g></svg>
<div class="t" style="left:884px;top:682px;font-size:15.3px;color:#555;transform:scaleX(0.986);transform-origin:0 0">Переводчик</div>

<!-- RIGHT PANEL -->
<div class="a" id="side"></div>
<svg style="left:1033px;top:43px" width="16" height="16" viewBox="0 0 16 16"><circle cx="8" cy="8" r="6.9" stroke="#111" stroke-width="1.5" fill="none"/><path d="M7.5 4 V8.5 L10.5 10.5" stroke="#111" stroke-width="1.5" fill="none"/></svg>
<div class="t" style="left:1183px;top:44px;font-size:13px;color:#111;-webkit-text-stroke:0.3px currentColor;transform:scaleX(0.992);transform-origin:0 0">Редактор</div>
<svg style="left:1338px;top:44px" width="15" height="13" viewBox="0 0 15 13"><path d="M7 1 H3 Q1 1 1 3 V10 Q1 12 3 12 H11 Q13.5 12 13.5 10 V8" stroke="#111" stroke-width="1.5" fill="none"/><rect x="8" y="0.5" width="6.5" height="5.5" rx="1.2" fill="#111"/><path d="M10 4.5 L12.5 2 M10.2 2 H12.5 V4.3" stroke="#fff" stroke-width="0.9" fill="none"/></svg>
<svg style="left:1377px;top:47px" width="10" height="10" viewBox="0 0 10 10"><path d="M0.6 0.6 L9.4 9.4 M9.4 0.6 L0.6 9.4" stroke="#111" stroke-width="1.4"/></svg>
<div class="a" style="left:1023px;top:70px;width:376px;height:1px;background:#e9e9e9"></div>
<svg style="left:1037px;top:84px" width="16" height="16" viewBox="0 0 16 16"><path d="M5 1 L1.5 4.5 L5 8" stroke="#111" stroke-width="1.6" fill="none"/><path d="M2 4.5 H9.5 Q14.5 4.5 14.5 9.5 Q14.5 14.5 9.5 14.5 H4" stroke="#111" stroke-width="1.6" fill="none"/></svg>
<svg style="left:1080px;top:84px" width="16" height="16" viewBox="0 0 16 16"><path d="M11 1 L14.5 4.5 L11 8" stroke="#c6c6c6" stroke-width="1.6" fill="none"/><path d="M14 4.5 H6.5 Q1.5 4.5 1.5 9.5 Q1.5 14.5 6.5 14.5 H12" stroke="#c6c6c6" stroke-width="1.6" fill="none"/></svg>
<div class="t" style="left:1163px;top:82px;font-size:18px;color:#e84fc9">a</div>
<svg style="left:1162px;top:98px" width="13" height="4" viewBox="0 0 13 4"><path d="M0.5 1 Q1.8 3.2 3.2 1.5 Q4.5 0 5.8 1.8 Q7.2 3.4 8.5 1.6 Q9.8 0 11 1.6 Q11.8 2.6 12.5 1.5" stroke="#ec4fb5" stroke-width="1.4" fill="none"/></svg>
<div class="a" style="left:1191px;top:73px;width:40px;height:38px;border:6px solid #fec700;background:#fff"></div>
<svg style="left:1204.5px;top:85px" width="15" height="15" viewBox="0 0 16 16"><g stroke="#e84fc9" stroke-width="1.7" fill="none" stroke-linecap="round"><path d="M2.2 4.3 Q7 4.6 12.6 3.4"/><path d="M6.4 0.8 Q5.9 8 8.6 14.6"/><path d="M10.9 6.4 Q9.2 11.8 5.2 13.6 Q2 14.6 1.9 11.8 Q2 8.2 8 7.9 Q14.6 7.7 14.6 11.6 Q14.4 14.6 10.2 15.2"/></g></svg>
<svg style="left:1248px;top:86px" width="15" height="14" viewBox="0 0 15 14"><path d="M5 0 Q5.6 4.2 10 5 Q5.6 5.8 5 10 Q4.4 5.8 0 5 Q4.4 4.2 5 0 Z" fill="#e84fc9"/><path d="M11.5 5 Q11.9 7.6 14.5 8 Q11.9 8.4 11.5 11 Q11.1 8.4 8.5 8 Q11.1 7.6 11.5 5 Z" fill="#e84fc9"/><path d="M6.5 9.5 Q6.8 11.2 8.5 11.7 Q6.8 12.2 6.5 14 Q6.2 12.2 4.5 11.7 Q6.2 11.2 6.5 9.5 Z" fill="#e84fc9"/></svg>
<svg style="left:1371px;top:85px" width="16" height="16" viewBox="0 0 16 16"><rect x="5" y="0.8" width="10.2" height="10.2" rx="3" stroke="#111" stroke-width="1.6" fill="none"/><path d="M5 5 H4 Q0.8 5 0.8 8 V12 Q0.8 15.2 4 15.2 H8 Q11 15.2 11 12 V11" stroke="#111" stroke-width="1.6" fill="none"/></svg>
<div class="t" style="left:1045px;top:139px;font-size:14.4px;color:#111;transform:scaleX(1.001);transform-origin:0 0">The Hatter is doing well and the others seem to be</div>
<div class="t" style="left:1045px;top:161px;font-size:14.4px;color:#111;transform:scaleX(0.995);transform-origin:0 0">doing well too. Send a big hello to everyone!</div>
<svg style="left:1320px;top:151px" width="11" height="8" viewBox="0 0 11 8"><ellipse cx="5.5" cy="4.5" rx="5" ry="3" fill="#d99cf5"/><path d="M2 3.5 L5.5 6.5 L9 3.5 Z" fill="#a020f0"/></svg>
<svg style="left:1320px;top:175px" width="11" height="8" viewBox="0 0 11 8"><ellipse cx="5.5" cy="4.5" rx="5" ry="3" fill="#d99cf5"/><path d="M2 4 L5.5 1 L9 4 Z" fill="#a020f0"/></svg>
<!-- floating pill -->
<div class="a" style="left:1068px;top:607px;width:287px;height:33px;border-radius:17px;background:#35363c"></div>
<div class="t" style="left:1083px;top:617px;font-size:13px;color:#f2f2f2;-webkit-text-stroke:0.3px currentColor;transform:scaleX(0.968);transform-origin:0 0">Переведено на</div>
<div class="t" style="left:1191px;top:617px;font-size:13px;color:#f2f2f2;-webkit-text-stroke:0.3px currentColor;transform:scaleX(1.027);transform-origin:0 0">Английский</div>
<svg style="left:1272px;top:622px" width="10" height="6" viewBox="0 0 10 6"><path d="M0.5 0.5 L5 5 L9.5 0.5" stroke="#f2f2f2" stroke-width="1.3" fill="none"/></svg>
<div class="t" style="left:1299px;top:617px;font-size:13px;color:#5a9cf2;-webkit-text-stroke:0.3px currentColor;transform:scaleX(1.011);transform-origin:0 0">Готово</div>
<!-- insert -->
<svg style="left:1046px;top:667px" width="12" height="12" viewBox="0 0 12 12"><path d="M10.5 0.5 V3 Q10.5 7.5 6 7.5 H1.5" stroke="#111" stroke-width="1.4" fill="none"/><path d="M4.5 4.5 L1.5 7.5 L4.5 10.5" stroke="#111" stroke-width="1.4" fill="none"/></svg>
<div class="t" style="left:1067px;top:666px;font-size:13px;color:#1a1a1a;transform:scaleX(0.969);transform-origin:0 0">Вставить на страницу</div>
<svg style="left:1364px;top:666px" width="14" height="14" viewBox="0 0 14 14"><circle cx="7" cy="7" r="6" stroke="#111" stroke-width="1.6" fill="none"/><path d="M7 3.5 V7.8" stroke="#111" stroke-width="1.8"/><circle cx="7" cy="10.2" r="1" fill="#111"/></svg>
<div class="a" style="left:1044px;top:692px;width:335px;height:37px;border-radius:10px;border:1px solid #f6d6f1"></div>
<div class="t" style="left:1061px;top:703px;font-size:14.5px;color:#9a9a9a;transform:scaleX(1.005);transform-origin:0 0">Помочь с текстом</div>
<svg style="left:1350px;top:704px" width="17" height="12" viewBox="0 0 17 12"><path d="M0 6 H16 M10.5 0.5 L16 6 L10.5 11.5" stroke="#a8a8a8" stroke-width="1.4" fill="none"/></svg>

</body></html>
